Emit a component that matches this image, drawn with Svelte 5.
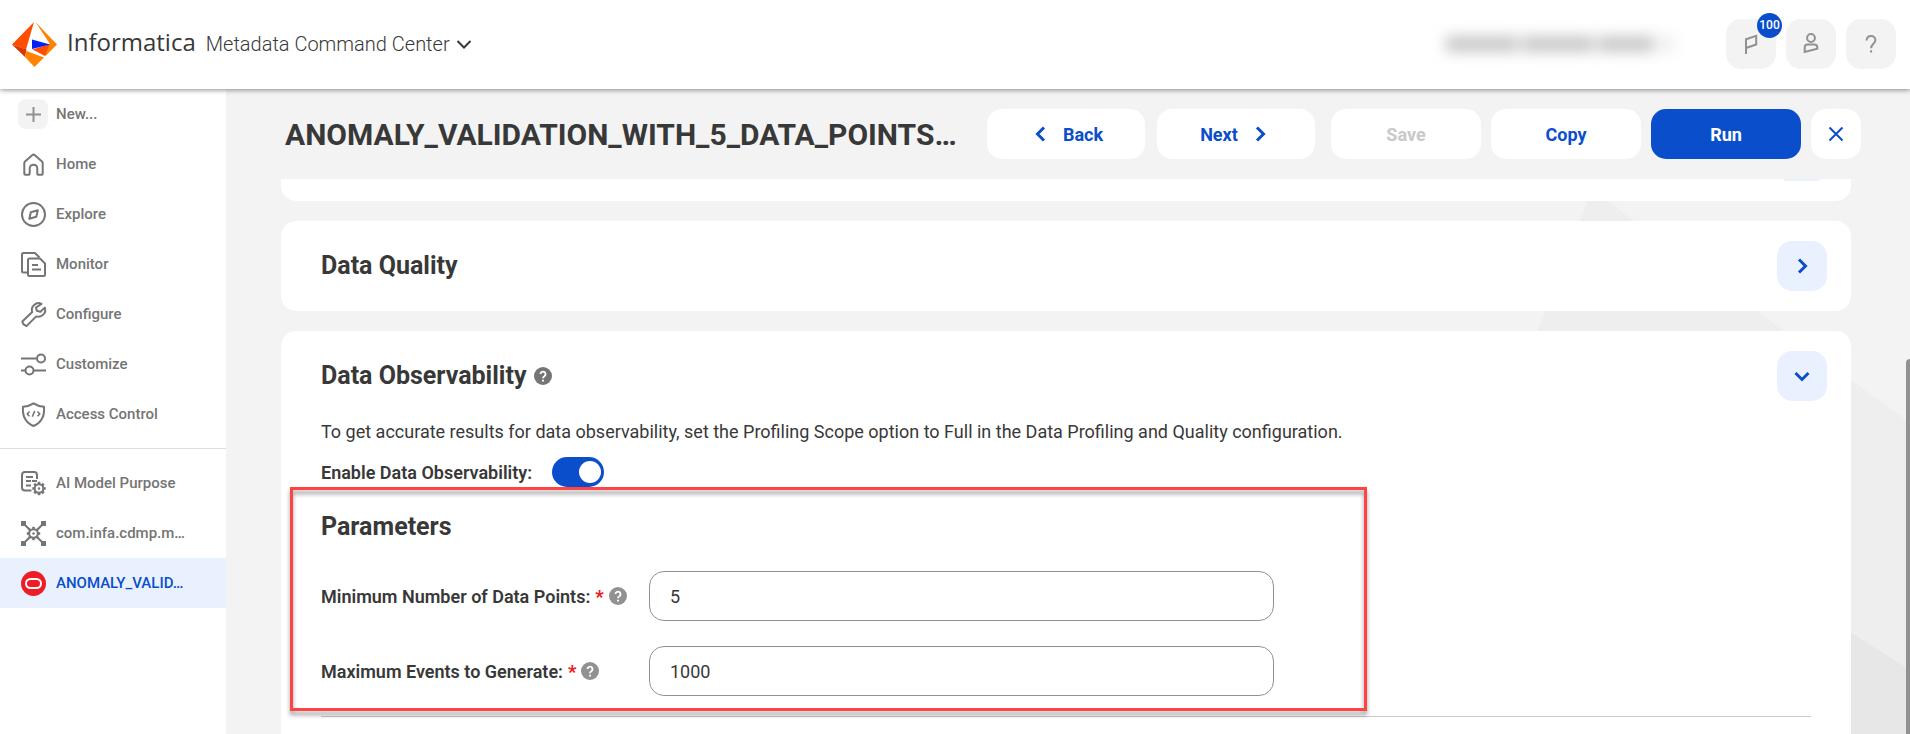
<script lang="ts">
  type NavItem = { label: string; icon: string };

  const mainNav: NavItem[] = [
    { label: "New...", icon: "plus" },
    { label: "Home", icon: "home" },
    { label: "Explore", icon: "compass" },
    { label: "Monitor", icon: "monitor" },
    { label: "Configure", icon: "wrench" },
    { label: "Customize", icon: "sliders" },
    { label: "Access Control", icon: "shield" },
  ];

  const openTabs: NavItem[] = [
    { label: "AI Model Purpose", icon: "docgear" },
    { label: "com.infa.cdmp.m…", icon: "network" },
    { label: "ANOMALY_VALID…", icon: "oracle" },
  ];

  let active = $state("ANOMALY_VALID…");
  let enabled = $state(true);
  let minPoints = $state("5");
  let maxEvents = $state("1000");
</script>

{#snippet gear(cx: number, cy: number)}
  <g transform="translate({cx} {cy})">
    <circle r="4.3" />
    <circle r="1.2" fill="currentColor" stroke="none" />
    {#each [0, 45, 90, 135, 180, 225, 270, 315] as angle}
      <path d="M0-4.5v-2.2" stroke-width="2.6" transform="rotate({angle})" />
    {/each}
  </g>
{/snippet}

{#snippet navIcon(name: string)}
  <svg class="icon" viewBox="0 0 25 25" aria-hidden="true">
    {#if name === "plus"}
      <path d="M12.5 5v15M5 12.5h15" />
    {:else if name === "home"}
      <path
        d="M3.3 21.8V11.2q0-1 .7-1.7l7.4-6.4q1.1-1 2.2 0L21 9.5q.7.7.7 1.7v10.6q0 1-1 1h-3.400q-1 0-1-1v-5.300a3.800 3.800 0 0 0-7.600 0v5.300q0 1-1 1H4.300q-1 0-1-1z"
      />
    {:else if name === "compass"}
      <circle cx="12.5" cy="12.5" r="11.5" />
      <path d="M16.800 8.200l-1.500 6.600-7 2 1.500-6.600z" />
    {:else if name === "monitor"}
      <path d="M7 20.500H2.500q-1.500 0-1.500-1.500V2.500Q1 1 2.500 1H14l4.500 4.500" />
      <path d="M8.500 6.500H19l5 5V22.500q0 1.500-1.500 1.500H8.500Q7 24 7 22.500V8q0-1.500 1.500-1.500z" />
      <path d="M11 13h6M11 17.500h9" />
    {:else if name === "wrench"}
      <path
        d="M20.500 1.800a6.800 6.800 0 0 0-9.300 8.300L1.300 19.500l1 2.600 3.200 2 9.800-9.700a6.800 6.800 0 0 0 8.500-8.800l-4.400 4.200-3.600-1-.8-3.300z"
      />
    {:else if name === "sliders"}
      <path d="M0 6.500h15M13 18.500h12M0 18.500h4" />
      <circle cx="20" cy="6.500" r="4" />
      <circle cx="8.500" cy="18.500" r="4" />
    {:else if name === "shield"}
      <path
        d="M12.500 1.300Q16.500 4 23 4.800C23.800 14 20.500 20.500 12.500 24 4.500 20.500 1.200 14 2 4.800 8.500 4 12.500 1.300 12.500 1.300z"
      />
      <path d="M8.500 9.500L6.200 12l2.300 2.300M16.500 9.500l2.300 2.500-2.300 2.300M13.700 9l-2.400 5.700" stroke-width="1.600" />
    {:else if name === "docgear"}
      <path d="M10.500 19.500H4q-3 0-3-3V4q0-3 3-3h9q3 0 3 3v4M5 6h7M5 10h5M11 10h5M5 14.500h5" />
      <g transform="translate(5 4.500)">{@render gear(13, 13)}</g>
    {:else if name === "network"}
      <path d="M3 3l5 5M22 3l-5 5M3 22l5-5M22 22l-5-5" />
      <path
        d="M0 0h5v5H0zM20 0h5v5h-5zM0 20h5v5H0zM20 20h5v5h-5z"
        fill="currentColor"
        stroke="none"
      />
      {@render gear(12.5, 12.5)}
    {:else if name === "oracle"}
      <circle cx="12.5" cy="12.5" r="12.5" fill="#ee1c25" stroke="none" />
      <rect x="5" y="8" width="15" height="9" rx="4.5" stroke="#fff" />
    {/if}
  </svg>
{/snippet}

{#snippet chevron(direction: string)}
  <svg class="chevron {direction}" viewBox="0 0 16 16" aria-hidden="true">
    <path d="M5 1.500L11.500 8 5 14.500" />
  </svg>
{/snippet}

{#snippet help()}
  <svg class="help" viewBox="0 0 18 18" aria-hidden="true">
    <circle cx="9" cy="9" r="9" fill="currentColor" />
    <path d="M6.500 7.100a2.500 2.500 0 1 1 3.900 2.100Q9 10 9 11.200M9 12.800v1.700" fill="none" stroke="#fff" stroke-width="1.900" />
  </svg>
{/snippet}

{#snippet navList(items: NavItem[])}
  <ul>
    {#each items as item}
      <li>
        <button
          class="nav-item"
          class:active={item.label === active}
          onclick={() => (active = item.label)}
        >
          <span class="nav-icon" class:boxed={item.icon === "plus"}>
            {@render navIcon(item.icon)}
          </span>
          <span>{item.label}</span>
        </button>
      </li>
    {/each}
  </ul>
{/snippet}

<div class="app">
  <header class="topbar">
    <svg class="logo" viewBox="0 0 45 45" aria-hidden="true">
      <path d="M22 0L0 22.500l14 5z" fill="#ff4e00" />
      <path d="M0 22.500L13 35l1.500-7.500z" fill="#d93600" />
      <path d="M23.500 0L45 22.500 33.500 34 31 27l7-5z" fill="#ff8200" />
      <path d="M14.500 29L13 35l9.500 10 9.500-9.500z" fill="#ff8200" />
      <path d="M20.500 27.500L37.500 22 33 34z" fill="#ff4e00" />
      <path d="M20 17.500L38 22.500 20 27z" fill="#001eff" />
    </svg>
    <span class="brand">Informatica</span>
    <button class="product">
      Metadata Command Center
      {@render chevron("down")}
    </button>
    <div class="account" aria-hidden="true">
      <i class="one"></i><i class="two"></i><i class="three"></i><i class="four"></i>
    </div>
    <div class="tools">
      <button class="tool" aria-label="Notifications">
        <svg viewBox="0 0 20 20" aria-hidden="true">
          <path d="M5 20V5.300L15.200 1.800v8.700L5 14" />
        </svg>
        <span class="badge">100</span>
      </button>
      <button class="tool" aria-label="User">
        <svg viewBox="0 0 20 20" aria-hidden="true">
          <circle cx="10" cy="4" r="3.900" />
          <path d="M3.700 18v-4.500q0-3 3-3h6.600q3 0 3 3v1.200z" />
        </svg>
      </button>
      <button class="tool" aria-label="Help">
        <svg viewBox="0 0 20 20" aria-hidden="true">
          <path d="M5.600 6.600C5.600 0 14.400 1.200 14.400 6c0 3.800-4.300 3.700-4.300 8.300M10.100 16.300v2.200" />
        </svg>
      </button>
    </div>
  </header>

  <div class="body">
    <nav class="sidebar">
      {@render navList(mainNav)}
      <hr />
      {@render navList(openTabs)}
    </nav>

    <main>
      <svg class="backdrop" viewBox="0 0 420 645" aria-hidden="true">
        <path d="M102 101L0 365v280h420V334z" fill="#eee" />
        <path d="M102 380L420 581v64H102z" fill="#e7e7e7" />
      </svg>

      <div class="page-head">
        <h1>ANOMALY_VALIDATION_WITH_5_DATA_POINTS…</h1>
        <div class="steps">
          <button class="btn step">{@render chevron("left")}Back</button>
          <button class="btn step">Next{@render chevron("right")}</button>
        </div>
        <div class="actions">
          <button class="btn" disabled>Save</button>
          <button class="btn">Copy</button>
          <button class="btn primary">Run</button>
          <button class="btn close" aria-label="Close">
            <svg viewBox="0 0 16 16" aria-hidden="true"><path d="M1.500 1.500l13 13M14.500 1.500l-13 13" /></svg>
          </button>
        </div>
      </div>

      <div class="cards">
        <section class="card tail">
          <span class="peek"></span>
        </section>

        <section class="card">
          <div class="card-head">
            <h2>Data Quality</h2>
            <button class="toggle-card" aria-label="Expand Data Quality">
              {@render chevron("right")}
            </button>
          </div>
        </section>

        <section class="card open">
          <div class="card-head">
            <h2>Data Observability {@render help()}</h2>
            <button class="toggle-card" aria-label="Collapse Data Observability">
              {@render chevron("down")}
            </button>
          </div>
          <div class="content">
            <p>
              To get accurate results for data observability, set the Profiling Scope option to
              Full in the Data Profiling and Quality configuration.
            </p>
            <div class="enable">
              <label for="enable">Enable Data Observability:</label>
              <input id="enable" class="switch" type="checkbox" role="switch" bind:checked={enabled} />
            </div>
            <div class="params">
              <h2>Parameters</h2>
              <div class="field">
                <label for="min-points">
                  Minimum Number of Data Points: <b>*</b>
                  {@render help()}
                </label>
                <input id="min-points" type="text" bind:value={minPoints} />
              </div>
              <div class="field">
                <label for="max-events">
                  Maximum Events to Generate: <b>*</b>
                  {@render help()}
                </label>
                <input id="max-events" type="text" bind:value={maxEvents} />
              </div>
            </div>
            <hr />
          </div>
        </section>
      </div>
      <div class="scroll-thumb"></div>
    </main>
  </div>
</div>

<style>
  :global(body) {
    margin: 0;
  }
  .app {
    --blue: #0a4ecb;
    --blue-soft: #eaf1fe;
    --text: #383838;
    --muted: #757575;
    --line: #c9c9c9;
    display: flex;
    flex-direction: column;
    height: 100vh;
    overflow: hidden;
    background: #f3f3f3;
    color: var(--text);
    font-family: Roboto, "Liberation Sans", sans-serif;
    font-size: 18px;
  }
  button,
  input {
    font: inherit;
    color: inherit;
    margin: 0;
    box-sizing: border-box;
  }
  button {
    border: 0;
    padding: 0;
    background: none;
    cursor: pointer;
  }
  svg {
    display: block;
    flex: none;
  }
  h1,
  h2,
  p {
    margin: 0;
  }
  hr {
    border: 0;
    border-top: 1px solid var(--line);
    margin: 0;
  }

  .topbar {
    position: relative;
    z-index: 2;
    display: flex;
    align-items: center;
    flex: none;
    height: 89px;
    box-sizing: border-box;
    padding: 0 14px 1px 12px;
    background: #fff;
    box-shadow: 0 1px 5px rgba(0, 0, 0, 0.45);
  }
  .logo {
    width: 45px;
    height: 45px;
  }
  .brand {
    margin-left: 10px;
    padding-bottom: 4px;
    font-family: "Open Sans", sans-serif;
    font-size: 24px;
    line-height: 32px;
  }
  .product {
    display: flex;
    align-items: center;
    gap: 6px;
    margin-left: 10px;
    font-size: 20px;
    font-weight: 300;
  }
  .chevron {
    width: 16px;
    height: 16px;
    fill: none;
    stroke: currentColor;
    stroke-width: 2;
  }
  .chevron.down {
    transform: rotate(90deg);
  }
  .chevron.left {
    transform: rotate(180deg);
  }
  .account {
    display: flex;
    gap: 4px;
    margin-left: auto;
    filter: blur(7px);
  }
  .account i {
    height: 16px;
    background: #c8c8c8;
  }
  .account .one {
    width: 72px;
  }
  .account .two {
    width: 72px;
  }
  .account .three {
    width: 56px;
  }
  .account .four {
    width: 16px;
    background: #eee;
  }
  .tools {
    display: flex;
    gap: 10px;
    margin-left: 52px;
  }
  .tool {
    position: relative;
    display: grid;
    place-items: center;
    width: 50px;
    height: 50px;
    border-radius: 15px;
    background: #f3f3f3;
  }
  .tool svg {
    width: 20px;
    height: 20px;
    fill: none;
    stroke: #919191;
    stroke-width: 2;
    overflow: visible;
  }
  .badge {
    position: absolute;
    top: -6px;
    right: -6px;
    width: 25px;
    border-radius: 50%;
    background: var(--blue);
    color: #fff;
    font-size: 12px;
    font-weight: 500;
    line-height: 25px;
    text-align: center;
  }

  .body {
    display: flex;
    flex: 1;
    min-height: 0;
  }
  .sidebar {
    flex: none;
    width: 226px;
    background: #fff;
  }
  .sidebar ul {
    list-style: none;
    margin: 0;
    padding: 0 0 9px;
  }
  .sidebar hr {
    border-color: #ddd;
    margin-bottom: 9px;
  }
  .nav-item {
    display: flex;
    align-items: center;
    gap: 8px;
    width: 100%;
    height: 50px;
    padding-left: 18px;
    color: var(--muted);
    font-size: 15px;
    font-weight: 500;
    white-space: nowrap;
  }
  .nav-item.active {
    background: var(--blue-soft);
    color: var(--blue);
  }
  .nav-icon {
    display: grid;
    place-items: center;
    width: 30px;
    height: 30px;
    border-radius: 8px;
  }
  .nav-icon.boxed {
    background: #f3f3f3;
    color: #919191;
  }
  .icon {
    width: 25px;
    height: 25px;
    overflow: visible;
    fill: none;
    stroke: currentColor;
    stroke-width: 2;
    stroke-linejoin: round;
  }

  main {
    position: relative;
    flex: 1;
    min-width: 0;
    display: flex;
    flex-direction: column;
  }
  .backdrop {
    position: absolute;
    top: 0;
    right: 0;
    width: 420px;
    height: 645px;
  }
  .page-head {
    position: relative;
    display: flex;
    align-items: center;
    flex: none;
    gap: 16px;
    padding: 20px 49px 20px 59px;
  }
  h1 {
    flex: 1;
    min-width: 0;
    overflow: hidden;
    padding-top: 2px;
    font-size: 30px;
    font-weight: 700;
    line-height: 40px;
    white-space: nowrap;
  }
  .steps {
    display: flex;
    gap: 12px;
  }
  .actions {
    display: flex;
    gap: 10px;
  }
  .btn {
    display: flex;
    align-items: center;
    justify-content: center;
    width: 150px;
    height: 50px;
    border-radius: 15px;
    background: #fff;
    color: var(--blue);
    font-weight: 700;
  }
  .btn.step {
    width: 158px;
    gap: 10px;
  }
  .step .chevron {
    padding: 0 4px;
    stroke-width: 3;
  }
  .btn:disabled {
    color: var(--line);
    cursor: default;
  }
  .btn.primary {
    background: var(--blue);
    color: #fff;
  }
  .btn.close {
    width: 50px;
  }
  .btn.close svg {
    width: 16px;
    height: 16px;
    fill: none;
    stroke: currentColor;
    stroke-width: 2;
  }

  .cards {
    position: relative;
    flex: 1;
    min-height: 0;
    display: flex;
    flex-direction: column;
    gap: 20px;
    overflow: hidden;
    padding: 0 59px 0 55px;
  }
  .card {
    flex: none;
    box-sizing: border-box;
    padding: 20px 24px 20px 40px;
    border-radius: 15px;
    background: #fff;
  }
  /* the section above, scrolled almost out of view */
  .card.tail {
    display: flex;
    justify-content: flex-end;
    height: 22px;
    padding: 0 31px 0 40px;
    border-radius: 0 0 15px 15px;
  }
  .peek {
    width: 36px;
    height: 2px;
    border-radius: 0 0 8px 8px;
    background: var(--blue-soft);
  }
  .card.open {
    flex: 1;
    border-radius: 15px 15px 0 0;
  }
  .card-head {
    display: flex;
    align-items: center;
    justify-content: space-between;
  }
  h2 {
    display: flex;
    align-items: center;
    gap: 7px;
    font-size: 25px;
    font-weight: 700;
    line-height: 30px;
  }
  .toggle-card {
    display: grid;
    place-items: center;
    width: 50px;
    height: 50px;
    border-radius: 15px;
    background: var(--blue-soft);
    color: var(--blue);
  }
  .toggle-card .chevron {
    stroke-width: 3;
  }
  .help {
    width: 18px;
    height: 18px;
    color: #919191;
  }
  h2 .help {
    color: var(--muted);
  }
  .content {
    padding: 19px 16px 0 0;
  }
  p {
    line-height: 24px;
  }
  .enable {
    display: flex;
    align-items: center;
    gap: 20px;
    margin-top: 13px;
  }
  label {
    font-weight: 600;
  }
  .switch {
    appearance: none;
    display: flex;
    align-items: center;
    width: 52px;
    height: 30px;
    padding: 0 3px;
    border-radius: 15px;
    background: #919191;
    cursor: pointer;
  }
  .switch::before {
    content: "";
    width: 22px;
    height: 22px;
    border-radius: 50%;
    background: #fff;
  }
  .switch:checked {
    justify-content: flex-end;
    background: var(--blue);
  }
  .params {
    position: relative;
    display: flex;
    flex-direction: column;
    gap: 25px;
    padding: 25px 0 15px;
    margin-bottom: 5px;
  }
  .params h2 {
    margin-bottom: 4px;
  }
  /* callout frame around the parameter fields */
  .params::before {
    content: "";
    position: absolute;
    top: 0;
    bottom: 0;
    left: -31px;
    width: 1077px;
    box-sizing: border-box;
    border: 3px solid #ff4343;
    filter: drop-shadow(0 4px 2px rgba(0, 0, 0, 0.4));
    pointer-events: none;
  }
  .field {
    display: flex;
    align-items: center;
  }
  .field label {
    display: flex;
    align-items: center;
    gap: 5px;
    flex: none;
    width: 328px;
  }
  .field b {
    color: #ee1c25;
  }
  .field input {
    flex: 0 1 625px;
    min-width: 0;
    height: 50px;
    padding: 0 20px;
    border: 1px solid #919191;
    border-radius: 15px;
    background: #fff;
  }
  .scroll-thumb {
    position: absolute;
    top: 270px;
    right: 0;
    bottom: 0;
    width: 4px;
    border-radius: 4px 0 0 0;
    background: #919191;
  }
</style>
